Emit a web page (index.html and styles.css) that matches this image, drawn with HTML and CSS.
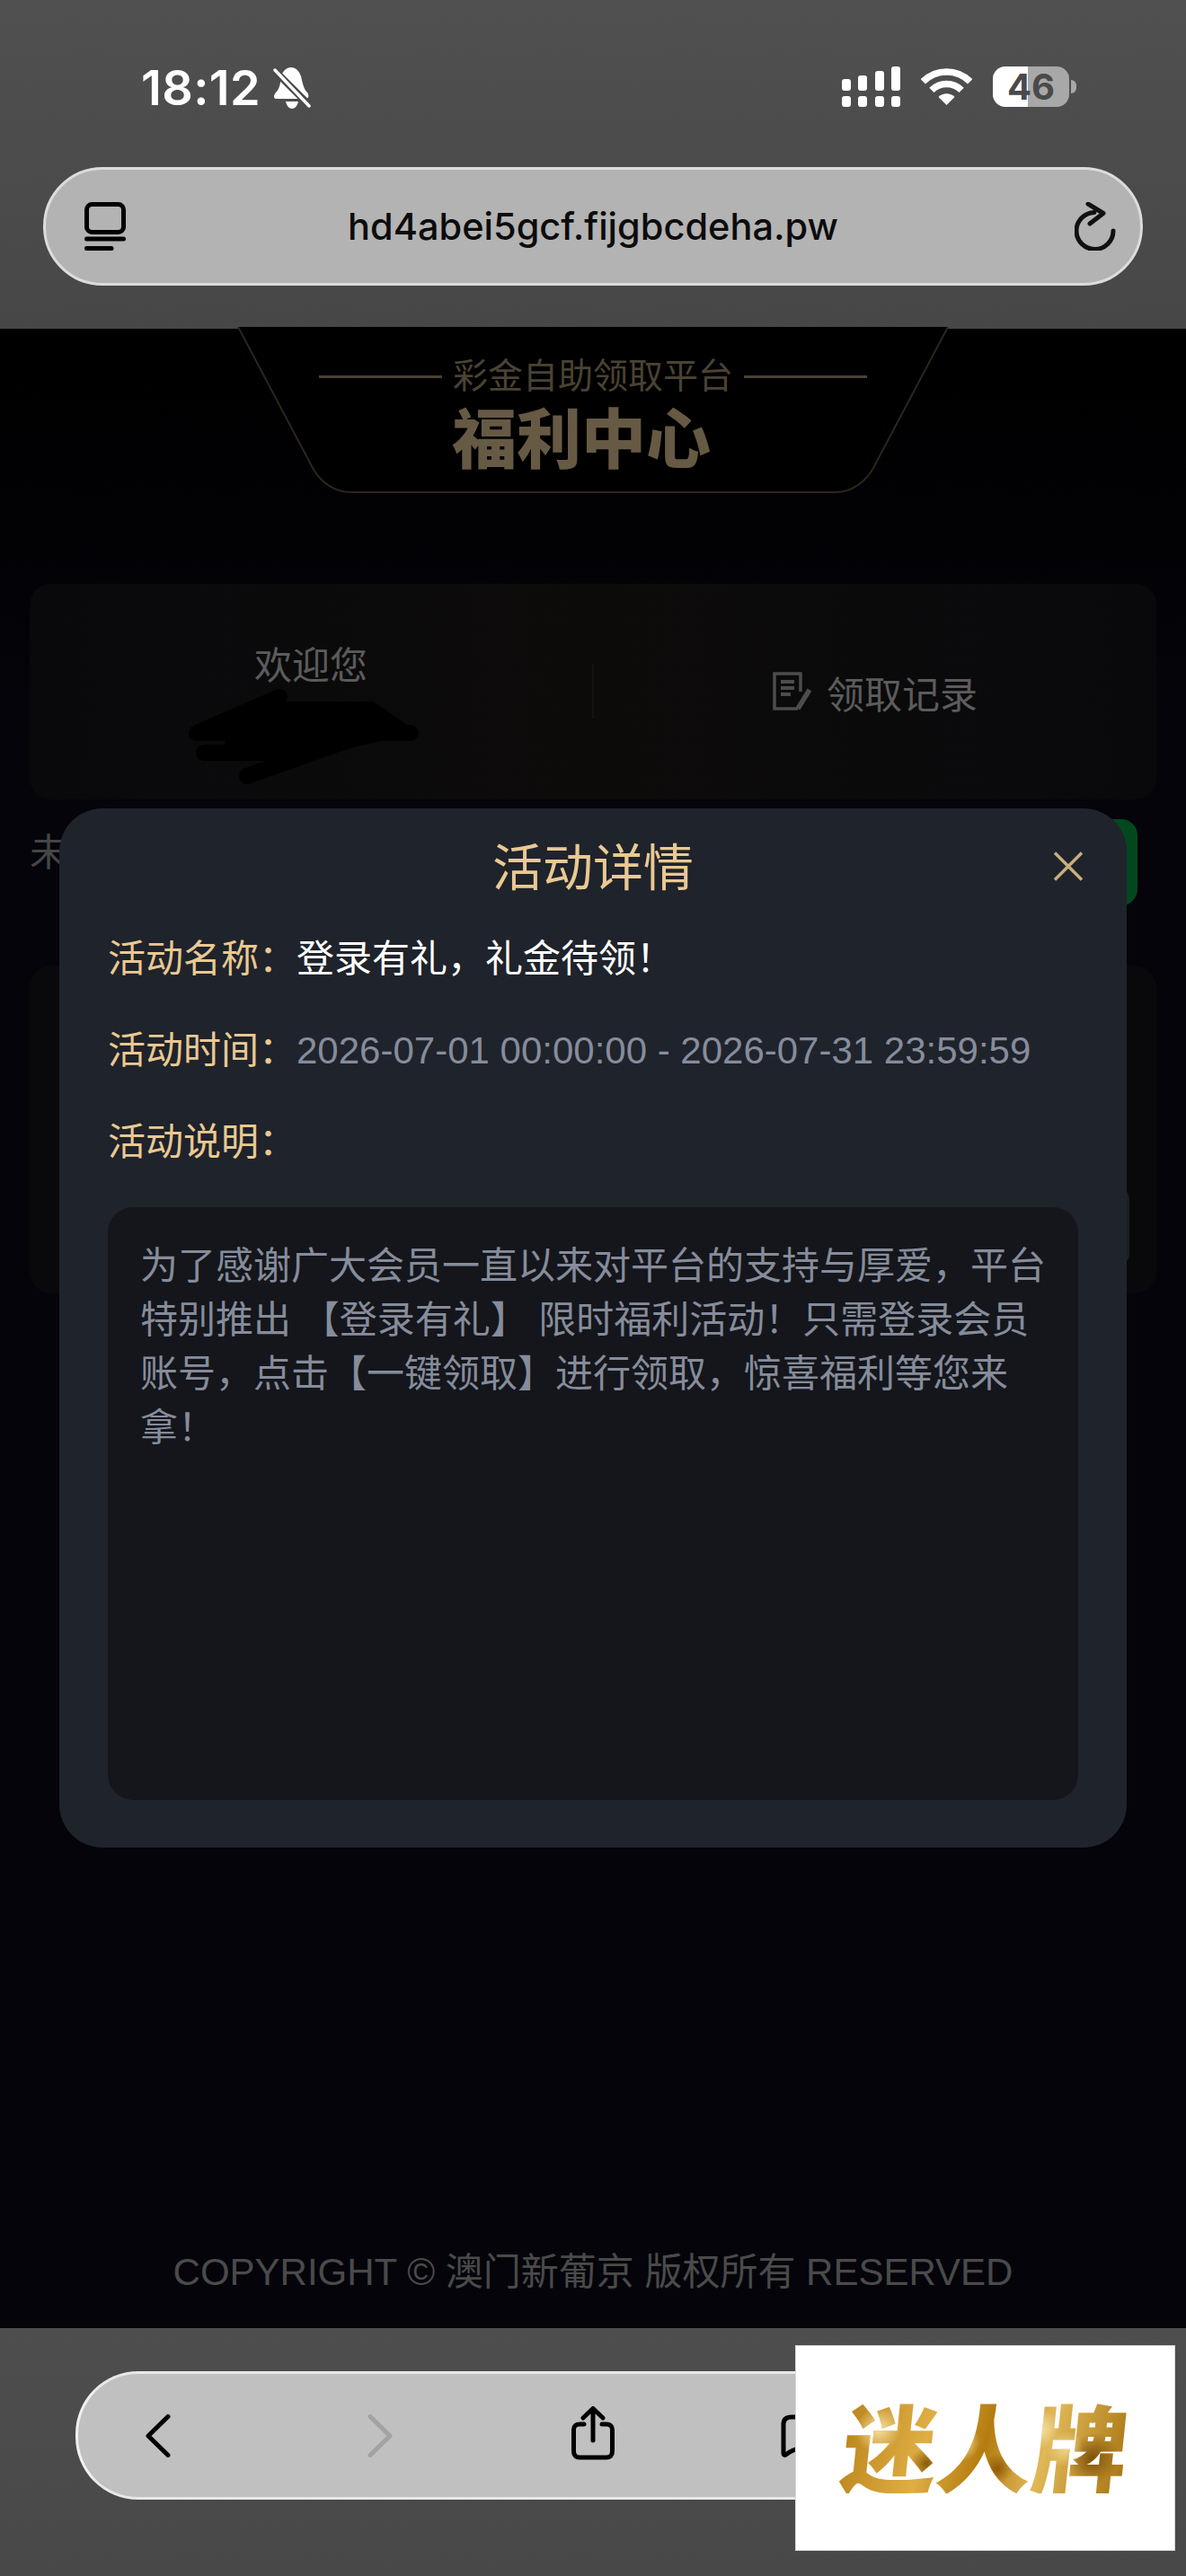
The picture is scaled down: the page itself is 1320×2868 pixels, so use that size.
FILE: index.html
```html
<!DOCTYPE html>
<html lang="zh-CN">
<head>
  <meta charset="UTF-8">
  <title>活动详情</title>
  <link rel="stylesheet" href="styles.css">
</head>
<body>
  <div class="screen">
    <div class="top-bar">
      <div class="status">
        <div class="status-left">
          <span class="time">18:12</span>
          <svg class="bell" viewBox="0 0 42 46">
            <path fill="#fff" d="M20 0C25 0 29 4 31 10C33 18 34 24 38 28C40 31 40 34 37 35L3 35C0 34 .5 31 3 28C7 24 8 18 9 11C10 4 15 0 20 0Z"/>
            <path fill="#fff" d="M14 38H28C27 43 24 46 21 46C18 46 15 43 14 38Z"/>
            <path stroke="#4b4b4b" stroke-width="8" d="M1 3L41 43"/>
            <path stroke="#fff" stroke-width="3.5" stroke-linecap="round" d="M2 3L40 43"/>
          </svg>
        </div>
        <div class="status-right">
          <div class="signal">
            <div class="signal-top">
              <i class="bar-a"></i><i class="bar-b"></i><i class="bar-c"></i><i class="bar-d"></i>
            </div>
            <div class="signal-bottom">
              <i></i><i></i><i></i><i></i>
            </div>
          </div>
          <svg class="wifi" viewBox="0 0 57 42" fill="none" stroke="#fff" stroke-width="7.5">
            <path d="M2.3 15.8A37 37 0 0 1 54.7 15.8"/>
            <path d="M11.9 25.4A23.5 23.5 0 0 1 45.1 25.4"/>
            <path fill="#fff" stroke="none" d="M28.5 42L19.5 33A12.7 12.7 0 0 1 37.5 33Z"/>
          </svg>
          <div class="battery"><span>46</span></div>
          <div class="battery-cap"></div>
        </div>
      </div>
      <div class="url-bar">
        <svg class="tabs-icon" viewBox="0 0 46 54" fill="none" stroke="#000" stroke-width="5">
          <rect x="2.5" y="2.5" width="41" height="31" rx="6"/>
          <path stroke-linecap="round" d="M2.5 41H43.5M2.5 51.5H30"/>
        </svg>
        <span class="url">hd4abei5gcf.fijgbcdeha.pw</span>
        <svg class="reload-icon" viewBox="0 0 46 54" fill="none" stroke="#111" stroke-width="5" stroke-linecap="round" stroke-linejoin="round">
          <path d="M43 32A20.5 20.5 0 1 1 22 11.5"/>
          <path d="M15 2L32 12.5L17 24"/>
        </svg>
      </div>
    </div>

    <div class="page">
      <div class="head">
        <svg class="head-shape" viewBox="0 0 800 184" fill="#000" stroke="#2b261d" stroke-width="2">
          <path d="M5 -2L88 155C96 170 112 182 130 182H670C688 182 704 170 712 155L795 -2"/>
        </svg>
        <div class="head-sub">
          <span class="head-line"></span>
          <span>彩金自助领取平台</span>
          <span class="head-line"></span>
        </div>
        <div class="head-title">福利中心</div>
      </div>

      <div class="user-card">
        <div class="user-col">
          <div class="welcome">欢迎您</div>
          <svg class="scribble" viewBox="0 0 270 110" fill="none" stroke="#000" stroke-width="18" stroke-linecap="round" stroke-linejoin="round">
            <path stroke="#6b5a3a" stroke-width="2" d="M205 26H222C227 26 229 30 228 36"/>
            <path fill="#000" stroke-width="10" d="M112 12L20 52L250 46L215 22L95 22Z"/>
            <path d="M112 12L20 52H258"/>
            <path d="M28 74H130L240 48"/>
            <path d="M76 100L200 56"/>
            <path d="M60 62H180"/>
            <path d="M100 36H210"/>
          </svg>
        </div>
        <div class="user-split"></div>
        <div class="record">
          <svg class="record-icon" viewBox="0 0 44 44" fill="none" stroke="#4c4c4c" stroke-width="3.5">
            <path d="M28 41H2V2H31V22"/>
            <path d="M9 11H24M9 18H24M9 25H20" stroke-width="4"/>
            <path d="M28 41L41 20" stroke-width="5.5"/>
          </svg>
          <span>领取记录</span>
        </div>
      </div>

      <div class="notice">
        <span class="notice-text">未</span>
        <span class="notice-btn"></span>
      </div>

      <div class="list-card">
        <span class="list-btn"></span>
      </div>

      <div class="copyright">COPYRIGHT © 澳门新葡京 版权所有 RESERVED</div>
    </div>

    <div class="bottom-bar">
      <div class="nav-bar">
        <svg class="nav-chevron" viewBox="0 0 28 48" fill="none" stroke="#000" stroke-width="5" stroke-linecap="round" stroke-linejoin="round">
          <path d="M25 2.500L3 24L25 45.500"/>
        </svg>
        <svg class="nav-chevron nav-next" viewBox="0 0 28 48" fill="none" stroke="#a3a3a3" stroke-width="5" stroke-linecap="round" stroke-linejoin="round">
          <path d="M3 2.500L25 24L3 45.500"/>
        </svg>
        <svg class="nav-share" viewBox="0 0 48 60" fill="none" stroke="#000" stroke-width="5" stroke-linecap="round" stroke-linejoin="round">
          <path d="M14 20H9C5 20 2.500 22.500 2.500 26V50C2.500 54.500 5 57 9 57H39C43 57 45.500 54.500 45.500 50V26C45.500 22.500 43 20 39 20H34"/>
          <path d="M24 38V3M13 13L24 2.500L35 13"/>
        </svg>
        <svg class="nav-book" viewBox="0 0 40 48" fill="none" stroke="#000" stroke-width="5" stroke-linecap="round" stroke-linejoin="round">
          <path d="M40 3H12C6 3 3 6 3 11V43C3 46 5 46 7 44C14 38 24 37 40 37"/>
        </svg>
      </div>
    </div>

    <div class="modal">
      <h2 class="modal-title">活动详情</h2>
      <svg class="modal-close" viewBox="0 0 34 32" fill="none" stroke="#c9ae80" stroke-width="3.500">
        <path d="M2 1L32 31M32 1L2 31"/>
      </svg>
      <div class="modal-row">
        <span class="modal-label">活动名称：</span>
        <span class="modal-name">登录有礼，礼金待领！</span>
      </div>
      <div class="modal-row">
        <span class="modal-label">活动时间：</span>
        <span class="modal-time">2026-07-01 00:00:00 - 2026-07-31 23:59:59</span>
      </div>
      <div class="modal-row">
        <span class="modal-label">活动说明：</span>
      </div>
      <div class="modal-desc">为了感谢广大会员一直以来对平台的支持与厚爱，平台特别推出 【登录有礼】 限时福利活动！只需登录会员账号，点击【一键领取】进行领取，惊喜福利等您来拿！</div>
    </div>

    <div class="brand">
      <span class="brand-text">迷人牌</span>
    </div>
  </div>
</body>
</html>
```

FILE: styles.css
```css
* {
  box-sizing: border-box;
}

body {
  margin: 0;
  background: #000;
  font-family: "Liberation Sans", "Noto Sans CJK SC", sans-serif;
}

.screen {
  position: relative;
  width: 1320px;
  height: 2868px;
  overflow: hidden;
  display: flex;
  flex-direction: column;
}

/* browser chrome, top */
.top-bar {
  height: 366px;
  padding: 74px 48px 0;
  background: linear-gradient(#505050, #474747);
}

.status {
  height: 112px;
  padding: 0 74px 0 109px;
  display: flex;
  justify-content: space-between;
  align-items: flex-start;
}

.status-left {
  display: flex;
  align-items: center;
  gap: 14px;
}

.time {
  font-family: Inter, sans-serif;
  font-size: 54px;
  font-weight: 600;
  line-height: 48px;
  letter-spacing: 0.4px;
  color: #fff;
}

.bell {
  width: 42px;
  height: 46px;
}

.status-right {
  display: flex;
  align-items: flex-start;
}

.signal {
  width: 65px;
  margin-right: 23px;
}

.signal i {
  display: block;
  width: 10px;
  border-radius: 3px;
  background: #fff;
}

.signal-top,
.signal-bottom {
  display: flex;
  justify-content: space-between;
  align-items: flex-end;
}

.signal-top {
  height: 27px;
  margin-bottom: 6px;
}

.signal-bottom i {
  height: 12px;
}

.signal .bar-a { height: 13px; }
.signal .bar-b { height: 17px; }
.signal .bar-c { height: 22px; }
.signal .bar-d { height: 27px; }

.wifi {
  width: 57px;
  height: 42px;
  margin: 1px 23px 0 0;
}

.battery {
  width: 85px;
  height: 45px;
  border-radius: 14px;
  background: linear-gradient(90deg, #fff 46%, #a8a8a8 46%);
  display: flex;
  justify-content: center;
  align-items: center;
  font-family: Inter, sans-serif;
  font-size: 40px;
  font-weight: 700;
  color: #4a4a4a;
}

.battery-cap {
  width: 6px;
  height: 15px;
  margin: 15px 0 0 2px;
  border-radius: 0 6px 6px 0;
  background: #a8a8a8;
}

.url-bar {
  height: 132px;
  padding: 0 27px 0 43px;
  border: 3px solid #dcdcdc;
  border-radius: 66px;
  background: #b3b3b3;
  display: grid;
  grid-template-columns: 1fr auto 1fr;
  align-items: center;
}

.tabs-icon,
.reload-icon {
  width: 46px;
  height: 54px;
}

.reload-icon {
  justify-self: end;
}

.url {
  margin-left: -16px;
  font-family: Inter, sans-serif;
  font-size: 41.5px;
  font-weight: 500;
  color: #0c0c0c;
}

/* page behind the dialog */
.page {
  height: 2226px;
  padding: 0 33px;
  background: linear-gradient(#000, #04040a 20%);
  display: flex;
  flex-direction: column;
}

.head {
  position: relative;
  height: 184px;
  padding-top: 30px;
  display: flex;
  flex-direction: column;
  align-items: center;
}

.head-shape {
  position: absolute;
  top: 0;
  left: 227px;
  width: 800px;
  height: 184px;
  overflow: visible;
}

.head-sub {
  position: relative;
  display: flex;
  align-items: center;
  gap: 12px;
  font-size: 39px;
  line-height: 46px;
  color: #4a4233;
}

.head-line {
  width: 137px;
  height: 3px;
  background: #4a4233;
}

.head-title {
  position: relative;
  margin: 10px 26px 0 0;
  font-size: 72px;
  font-weight: 900;
  line-height: 76px;
  color: #665a45;
}

.user-card {
  height: 240px;
  margin-top: 100px;
  border-radius: 24px;
  background: linear-gradient(90deg, #09090c, #0d0b0a 50%, #09090c);
  display: grid;
  grid-template-columns: 1fr 2px 1fr;
  align-items: center;
}

.user-col {
  padding-top: 62px;
  height: 240px;
  display: flex;
  flex-direction: column;
  align-items: center;
}

.welcome {
  font-size: 42px;
  line-height: 60px;
  color: #5b5b5b;
}

.scribble {
  width: 270px;
  height: 110px;
  margin: -8px 0 0 -24px;
}

.user-split {
  height: 60px;
  background: #141412;
}

.record {
  display: flex;
  justify-content: center;
  align-items: center;
  gap: 16px;
  font-size: 42px;
  color: #5c5c5c;
}

.record-icon {
  width: 44px;
  height: 44px;
}

.notice {
  height: 96px;
  margin-top: 22px;
  padding-right: 21px;
  display: flex;
  justify-content: space-between;
  align-items: flex-start;
}

.notice-text {
  font-size: 42px;
  line-height: 76px;
  color: #464646;
}

.notice-btn {
  width: 240px;
  height: 96px;
  border-radius: 18px;
  background: #03471f;
}

.list-card {
  height: 365px;
  margin-top: 67px;
  padding: 248px 30px 0 0;
  border-radius: 24px;
  background: #09090c;
  display: flex;
  justify-content: flex-end;
  align-items: flex-start;
}

.list-btn {
  width: 300px;
  height: 85px;
  border-radius: 12px;
  background: #1c1e23;
}

.copyright {
  margin-top: auto;
  padding-bottom: 38px;
  text-align: center;
  font-size: 42px;
  line-height: 48px;
  color: #4a4a4a;
}

/* browser chrome, bottom */
.bottom-bar {
  height: 276px;
  padding: 48px 84px 0;
  background: linear-gradient(#4e4e4e, #484848);
}

.nav-bar {
  height: 143px;
  padding-left: 75px;
  border: 3px solid #e8e8e8;
  border-left-color: #f0f0f0;
  border-radius: 70px;
  background: #c0c0c0;
  display: flex;
  align-items: center;
}

.nav-chevron {
  width: 28px;
  height: 48px;
}

.nav-next {
  margin-left: 219px;
}

.nav-share {
  width: 48px;
  height: 60px;
  margin: -5px 0 0 199px;
}

.nav-book {
  width: 40px;
  height: 48px;
  margin-left: 185px;
}

/* dialog */
.modal {
  position: absolute;
  top: 900px;
  left: 66px;
  width: 1188px;
  height: 1157px;
  padding: 37px 54px 0;
  border-radius: 48px;
  background: #1f232b;
}

.modal-title {
  margin: 0 0 41px;
  text-align: center;
  font-size: 56px;
  font-weight: 400;
  line-height: 60px;
  color: #e9c992;
}

.modal-close {
  position: absolute;
  top: 48px;
  right: 48px;
  width: 34px;
  height: 33px;
}

.modal-row {
  height: 60px;
  margin-bottom: 42px;
  display: flex;
  font-size: 42px;
  line-height: 60px;
}

.modal-label {
  color: #e9c992;
}

.modal-name {
  color: #fff;
}

.modal-time {
  color: #868c9b;
}

.modal-desc {
  height: 660px;
  padding: 36px;
  border-radius: 28px;
  background: #14161b;
  font-size: 42px;
  line-height: 60px;
  color: #868c9b;
}

/* watermark */
.brand {
  position: absolute;
  top: 2611px;
  left: 885px;
  width: 423px;
  height: 229px;
  border: 1px solid #d8d8d8;
  background: #fff;
  display: flex;
  justify-content: center;
  align-items: center;
}

.brand-text {
  margin-top: -10px;
  font-family: "Noto Sans CJK SC", sans-serif;
  font-size: 106px;
  font-weight: 900;
  line-height: 110px;
  color: transparent;
  transform: skewX(-6deg);
  background:
    radial-gradient(circle at 12% 35%, #f6e2a2 0, transparent 9%),
    radial-gradient(circle at 30% 70%, #8a5a0a 0, transparent 8%),
    radial-gradient(circle at 42% 50%, #f6dc90 0, transparent 10%),
    radial-gradient(circle at 55% 75%, #8f5a08 0, transparent 9%),
    radial-gradient(circle at 68% 35%, #f7e6ac 0, transparent 10%),
    radial-gradient(circle at 78% 55%, #f0d48a 0, transparent 8%),
    radial-gradient(circle at 88% 65%, #7d5008 0, transparent 10%),
    linear-gradient(100deg, #b9831a, #dfae44 30%, #b47c10 50%, #e0b858 70%, #a87412);
  -webkit-background-clip: text;
  background-clip: text;
}
```
